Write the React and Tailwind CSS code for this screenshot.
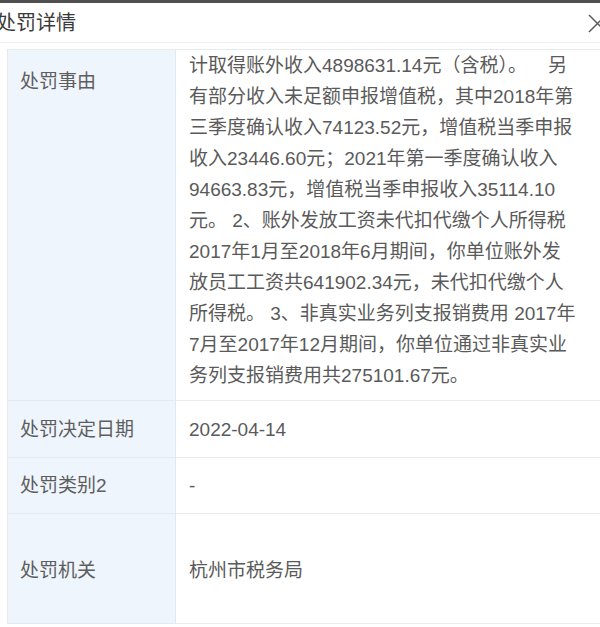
import React from "react";

const lines = [
  "计取得账外收入4898631.14元（含税）。\u00a0\u00a0\u00a0 另",
  "有部分收入未足额申报增值税，其中2018年第",
  "三季度确认收入74123.52元，增值税当季申报",
  "收入23446.60元；2021年第一季度确认收入",
  "94663.83元，增值税当季申报收入35114.10",
  "元。 2、账外发放工资未代扣代缴个人所得税",
  "2017年1月至2018年6月期间，你单位账外发",
  "放员工工资共641902.34元，未代扣代缴个人",
  "所得税。 3、非真实业务列支报销费用 2017年",
  "7月至2017年12月期间，你单位通过非真实业",
  "务列支报销费用共275101.67元。",
];

const font = { fontFamily: '"Liberation Sans", "Noto Sans CJK SC", sans-serif' };

function Row({ label, children, h, top, extra = "" }) {
  return (
    <div className={`flex border-b border-[#e6eaef] ${h}`}>
      <div
        className={`w-[168px] shrink-0 bg-[#eef5fd] border-r border-[#e3e9f0] pl-[12px] text-[19px] text-[#5e5e5e] leading-[31px] flex ${top ? "items-start pt-[16px]" : "items-center"} ${extra}`}
      >
        {label}
      </div>
      <div className={`flex-1 pl-[13px] text-[19px] text-[#5a5a5a] leading-[31px] flex ${top ? "items-start" : "items-center"} ${extra}`}>
        {children}
      </div>
    </div>
  );
}

export default function App() {
  return (
    <div className="w-[600px] h-[627px] overflow-hidden bg-white" style={font}>
      <div className="h-[3px] bg-[#505050]" />
      <div className="h-[40px] flex items-center border-b border-[#eceff2]">
        <span className="-ml-[4px] text-[20px] text-[#3a3a3a]">处罚详情</span>
        <svg className="ml-auto -mr-[8px] shrink-0" width="20" height="20" viewBox="0 0 20 20">
          <path d="M1 2 L18 19 M18 2 L1 19" stroke="#5a5a5a" strokeWidth="1.5" fill="none" />
        </svg>
      </div>
      <div className="mt-[6px] ml-[7px] w-[620px] border-t border-l border-[#e6eaef]">
        <Row label="处罚事由" h="h-[351px]" top>
          <div className="whitespace-nowrap">
            {lines.map((l, i) => (
              <div key={i}>{l}</div>
            ))}
          </div>
        </Row>
        <Row label="处罚决定日期" h="h-[57px]">2022-04-14</Row>
        <Row label="处罚类别2" h="h-[56px]">-</Row>
        <Row label="处罚机关" h="h-[110px]" extra="pt-[4px]">杭州市税务局</Row>
      </div>
    </div>
  );
}
